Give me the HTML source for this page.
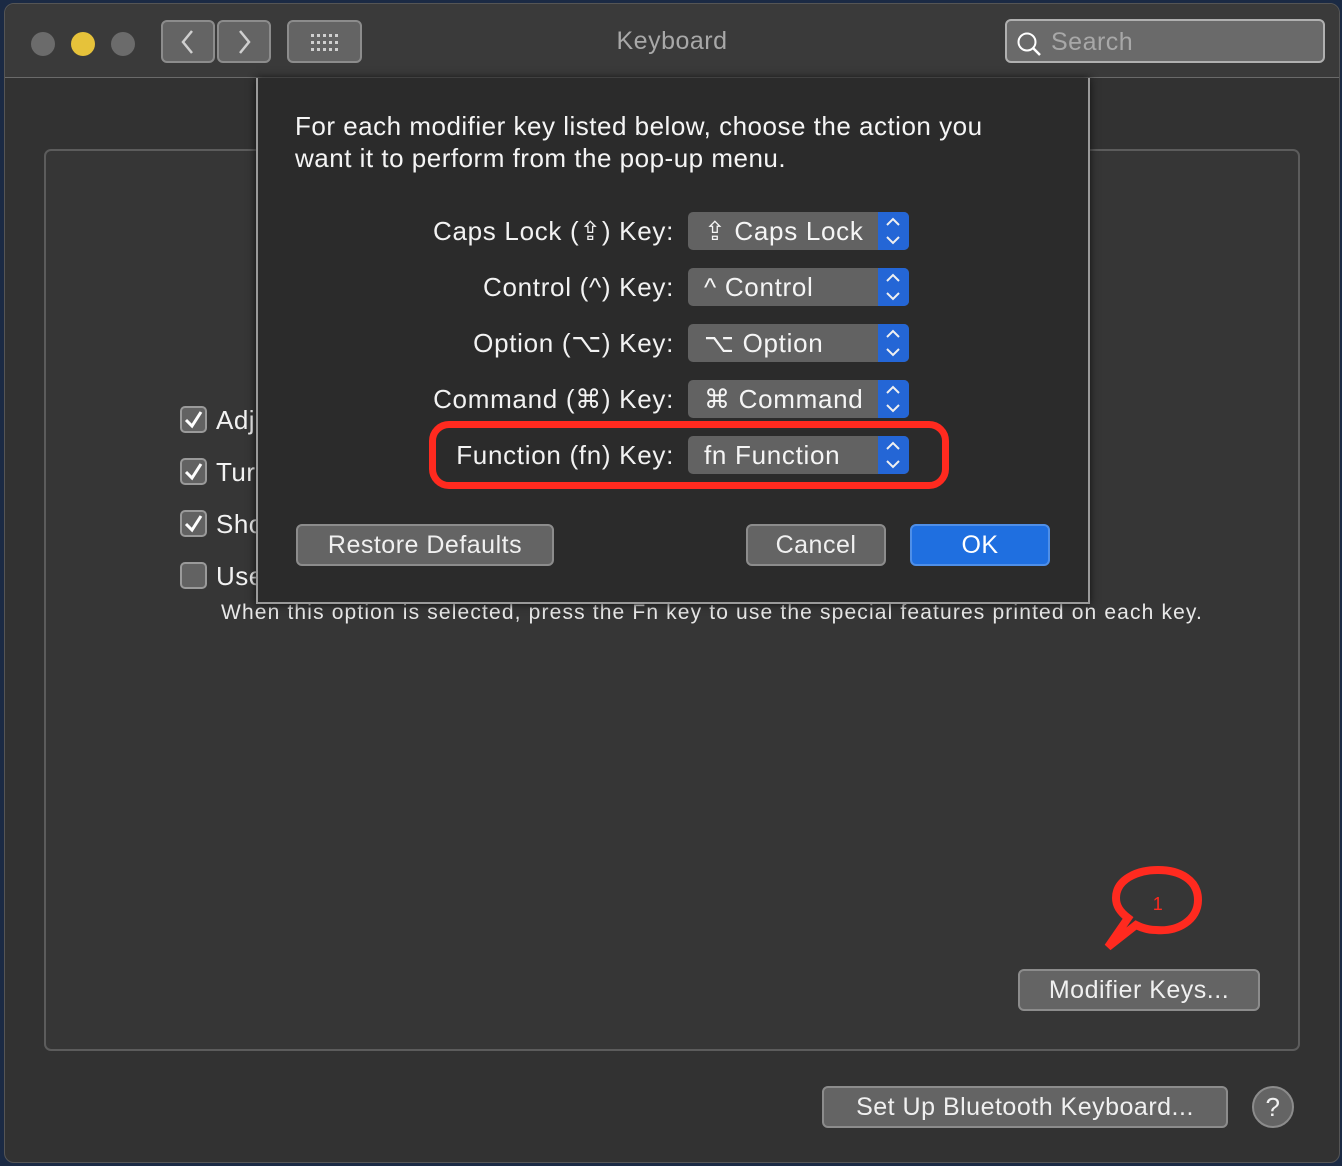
<!DOCTYPE html>
<html><head><meta charset="utf-8"><style>
*{box-sizing:border-box;margin:0;padding:0}
body{width:1342px;height:1166px;background:#1b2a44;font-family:"Liberation Sans",sans-serif;position:relative;overflow:hidden;color:#e8e8e8;letter-spacing:0.5px}
.win{position:absolute;left:4px;top:3px;width:1336px;height:1160px;background:#323232;border-radius:10px;border:1px solid #555}
.tb{position:absolute;left:0;top:0;right:0;height:74px;background:#3a3a3a;border-bottom:1px solid #6a6a6a;border-radius:10px 10px 0 0}
.dot{position:absolute;top:28px;width:24px;height:24px;border-radius:50%;background:#6b6b6b}
.btn{position:absolute;background:#646464;border:2px solid #8c8c8c;border-radius:6px;color:#f0f0f0;text-align:center;font-size:25px}
.abs{position:absolute}
.box{position:absolute;left:44px;top:149px;width:1256px;height:902px;border:2px solid #5c5c5c;border-radius:7px;background:#363636}
.sheet{position:absolute;left:256px;top:78px;width:834px;height:526px;background:#2b2b2b;border:2px solid #9a9a9a;border-top:none;box-shadow:0 0 8px #111}
.lbl{position:absolute;right:416px;font-size:26px;color:#f2f2f2;white-space:nowrap;letter-spacing:0.7px}
.pop{position:absolute;left:432px;width:221px;height:38px;background:#626262;border-radius:5px;font-size:26px;color:#f5f5f5;line-height:38px;padding-left:16px;letter-spacing:0.7px;white-space:nowrap}
.pop .ar{position:absolute;right:0;top:0;width:31px;height:38px;background:#2466d6;border-radius:0 5px 5px 0}
.cb{position:absolute;left:180px;width:27px;height:27px;border:2px solid #9a9a9a;border-radius:5px;background:#626262}
.cbt{position:absolute;left:216px;font-size:26px;color:#f2f2f2}
</style></head><body>
<div class="win">
 <div class="tb">
  <div class="dot" style="left:26px"></div>
  <div class="dot" style="left:66px;background:#e6c23a"></div>
  <div class="dot" style="left:106px"></div>
  <div class="btn" style="left:156px;top:16px;width:54px;height:43px"><svg width="50" height="40"><path d="M29 9 L20 20 L29 31" stroke="#cfcfcf" stroke-width="2.5" fill="none"/></svg></div>
  <div class="btn" style="left:212px;top:16px;width:54px;height:43px"><svg width="50" height="40"><path d="M21 9 L30 20 L21 31" stroke="#cfcfcf" stroke-width="2.5" fill="none"/></svg></div>
  <div class="btn" style="left:282px;top:16px;width:75px;height:43px"><svg width="71" height="40"><g fill="#cfcfcf"><rect x="22" y="12" width="3" height="3"/><rect x="28" y="12" width="3" height="3"/><rect x="34" y="12" width="3" height="3"/><rect x="40" y="12" width="3" height="3"/><rect x="46" y="12" width="3" height="3"/><rect x="22" y="19" width="3" height="3"/><rect x="28" y="19" width="3" height="3"/><rect x="34" y="19" width="3" height="3"/><rect x="40" y="19" width="3" height="3"/><rect x="46" y="19" width="3" height="3"/><rect x="22" y="26" width="3" height="3"/><rect x="28" y="26" width="3" height="3"/><rect x="34" y="26" width="3" height="3"/><rect x="40" y="26" width="3" height="3"/><rect x="46" y="26" width="3" height="3"/></g></svg></div>
  <div class="abs" style="left:0;right:0;top:23px;text-align:center;font-size:25px;color:#a8a8a8">Keyboard</div>
  <div class="btn" style="left:1000px;top:15px;width:320px;height:44px;background:#6a6a6a;border-color:#b0b0b0;text-align:left">
   <svg class="abs" style="left:8px;top:9px" width="28" height="28"><circle cx="12" cy="12" r="8.5" stroke="#fff" stroke-width="2" fill="none"/><path d="M18 18 L25 25" stroke="#fff" stroke-width="2.5"/></svg>
   <span class="abs" style="left:44px;top:7px;color:#a8a8a8;font-size:25px">Search</span></div>
 </div>
</div>
<div class="box"></div>
<div class="cb" style="top:406px"><svg width="23" height="23"><path d="M4 12 L10 18 L19 4" stroke="#fff" stroke-width="3" fill="none"/></svg></div>
<div class="cbt" style="top:405px">Adj</div>
<div class="cb" style="top:458px"><svg width="23" height="23"><path d="M4 12 L10 18 L19 4" stroke="#fff" stroke-width="3" fill="none"/></svg></div>
<div class="cbt" style="top:457px">Tur</div>
<div class="cb" style="top:510px"><svg width="23" height="23"><path d="M4 12 L10 18 L19 4" stroke="#fff" stroke-width="3" fill="none"/></svg></div>
<div class="cbt" style="top:509px">Sho</div>
<div class="cb" style="top:562px"></div>
<div class="cbt" style="top:561px">Use</div>
<div class="abs" style="left:221px;top:601px;font-size:21px;color:#e8e8e8;letter-spacing:1.15px;white-space:nowrap">When this option is selected, press the Fn key to use the special features printed on each key.</div>

<svg class="abs" style="left:1100px;top:862px" width="110" height="90"><path d="M58 8 C80 8 98 18 98 38 C98 58 78 70 56 68 C48 68 42 66 36 63 L8 85 L28 56 C20 50 16 44 16 36 C16 18 36 8 58 8 Z" stroke="#ff2a1f" stroke-width="8" fill="none"/><text x="58" y="48" font-size="18" fill="#ff2a1f" text-anchor="middle" font-family="Liberation Sans">1</text></svg>
<div class="btn" style="left:1018px;top:969px;width:242px;height:42px;line-height:38px">Modifier Keys...</div>
<div class="btn" style="left:822px;top:1086px;width:406px;height:42px;line-height:38px">Set Up Bluetooth Keyboard...</div>
<div class="btn" style="left:1252px;top:1086px;width:42px;height:42px;border-radius:50%;line-height:38px;font-size:26px">?</div>

<div class="sheet">
 <div class="abs" style="left:37px;top:32px;font-size:26px;line-height:32px;color:#f5f5f5;letter-spacing:0.5px;white-space:nowrap">For each modifier key listed below, choose the action you<br>want it to perform from the pop-up menu.</div>
</div>
<div style="position:absolute;left:256px;top:78px;width:834px;height:526px">
 <div class="lbl" style="top:138px">Caps Lock (⇪) Key:</div>
 <div class="pop" style="top:134px">⇪ Caps Lock<div class="ar"></div></div>
 <div class="lbl" style="top:194px">Control (^) Key:</div>
 <div class="pop" style="top:190px">^ Control<div class="ar"></div></div>
 <div class="lbl" style="top:250px">Option (⌥) Key:</div>
 <div class="pop" style="top:246px">⌥ Option<div class="ar"></div></div>
 <div class="lbl" style="top:306px">Command (⌘) Key:</div>
 <div class="pop" style="top:302px">⌘ Command<div class="ar"></div></div>
 <div class="lbl" style="top:362px">Function (fn) Key:</div>
 <div class="pop" style="top:358px">fn Function<div class="ar"></div></div>
 <div class="abs" style="left:173px;top:343px;width:520px;height:68px;border:7px solid #ff2a1f;border-radius:20px"></div>
 <div class="btn" style="left:40px;top:446px;width:258px;height:42px;line-height:38px">Restore Defaults</div>
 <div class="btn" style="left:490px;top:446px;width:140px;height:42px;line-height:38px">Cancel</div>
 <div class="btn" style="left:654px;top:446px;width:140px;height:42px;line-height:38px;background:#1f6fe0;border-color:#4f8fe8;color:#fff">OK</div>
</div>
<svg class="abs" style="left:0;top:0;pointer-events:none" width="1342" height="1166">
 <g stroke="#f0f0f0" stroke-width="2" fill="none">
  <path d="M887 225 L893 219 L899 225 M887 237 L893 243 L899 237"/>
  <path d="M887 281 L893 275 L899 281 M887 293 L893 299 L899 293"/>
  <path d="M887 337 L893 331 L899 337 M887 349 L893 355 L899 349"/>
  <path d="M887 393 L893 387 L899 393 M887 405 L893 411 L899 405"/>
  <path d="M887 449 L893 443 L899 449 M887 461 L893 467 L899 461"/>
 </g>
</svg>
</body></html>
